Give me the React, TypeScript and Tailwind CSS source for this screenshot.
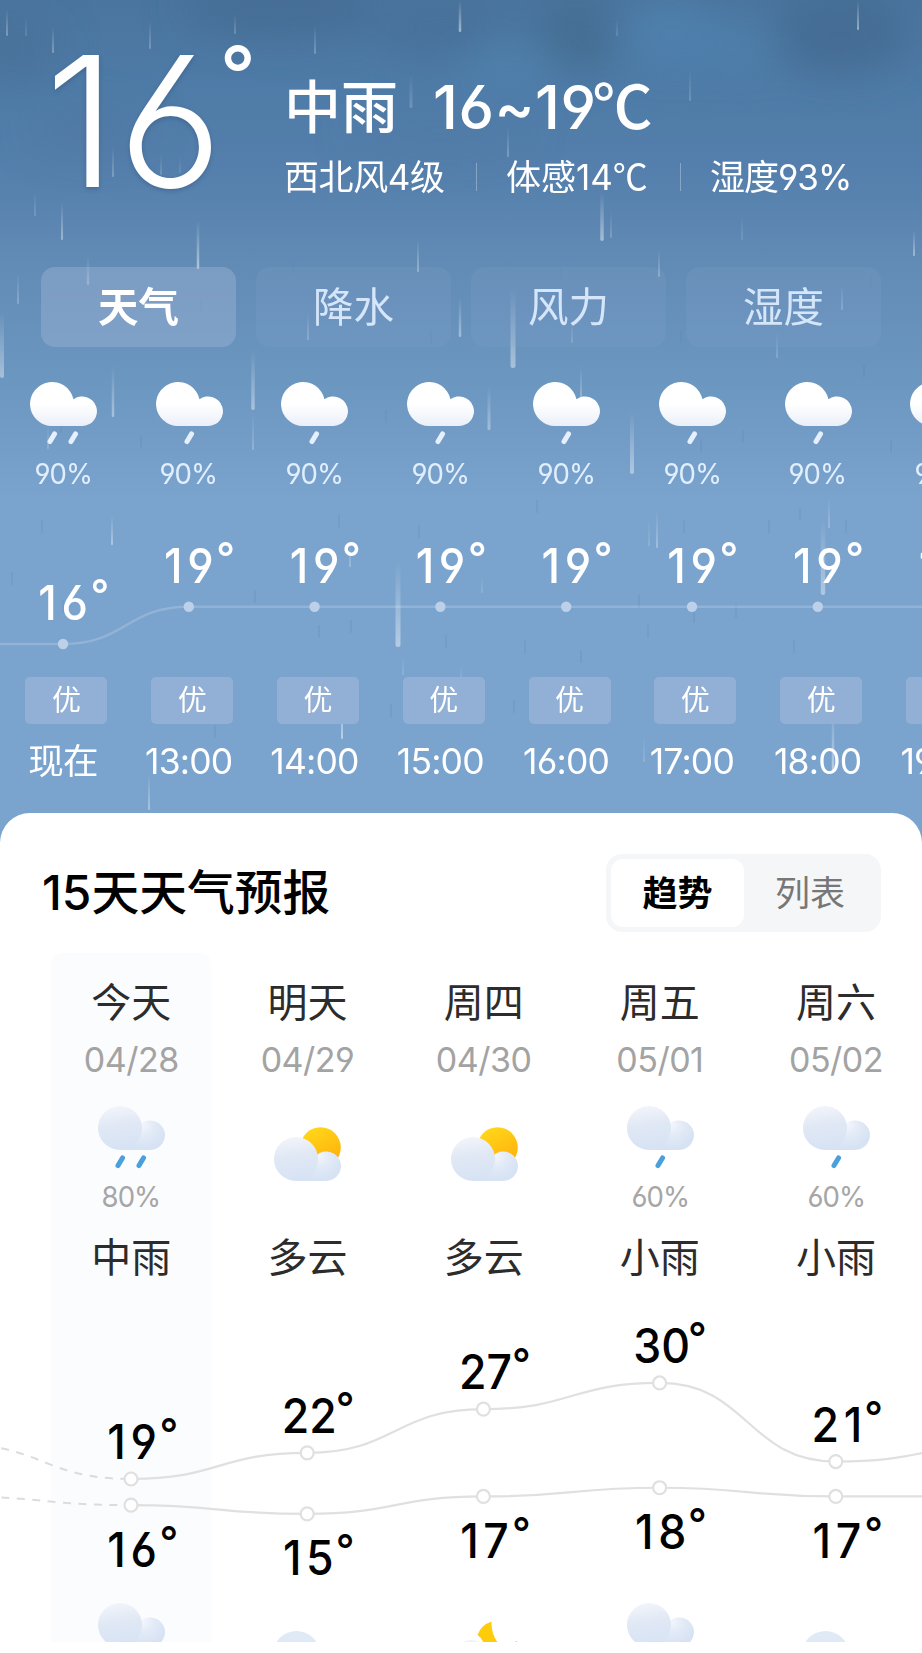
import clsx from 'clsx';

const HOUR_W = 125.8;
const DAY_W = 176.2;
const DAY_X0 = 131;

const tabs = ['天气', '降水', '风力', '湿度'];

const hours = [
  { time: '现在', temp: 16, pop: 90, drops: 2 },
  { time: '13:00', temp: 19, pop: 90, drops: 1 },
  { time: '14:00', temp: 19, pop: 90, drops: 1 },
  { time: '15:00', temp: 19, pop: 90, drops: 1 },
  { time: '16:00', temp: 19, pop: 90, drops: 1 },
  { time: '17:00', temp: 19, pop: 90, drops: 1 },
  { time: '18:00', temp: 19, pop: 90, drops: 1 },
  { time: '19:00', temp: 19, pop: 90, drops: 1 },
];

const days = [
  { name: '今天', date: '04/28', pop: 80, drops: 2, text: '中雨', high: 19, low: 16, night: 'rain' },
  { name: '明天', date: '04/29', pop: 0, drops: 0, text: '多云', high: 22, low: 15, night: 'overcast' },
  { name: '周四', date: '04/30', pop: 0, drops: 0, text: '多云', high: 27, low: 17, night: 'moon' },
  { name: '周五', date: '05/01', pop: 60, drops: 1, text: '小雨', high: 30, low: 18, night: 'rain' },
  { name: '周六', date: '05/02', pop: 60, drops: 1, text: '小雨', high: 21, low: 17, night: 'overcast' },
];

// x, top, height, width, opacity
const rain = [
  [7, 8, 28, 2, 0.3], [26, 16, 20, 1.5, 0.18], [53, 26, 27, 2, 0.3], [150, 20, 29, 2, 0.25], [235, 14, 20, 1.5, 0.3],
  [315, 24, 30, 2, 0.25], [460, 0, 32, 2.5, 0.5], [858, 0, 30, 2, 0.45], [617, 18, 18, 1.5, 0.2], [411, 74, 34, 3, 0.2],
  [690, 68, 33, 1.5, 0.25], [508, 126, 31, 2, 0.25], [113, 146, 31, 2, 0.25], [161, 155, 20, 2, 0.18], [180, 155, 18, 1.5, 0.15],
  [35, 192, 24, 1.5, 0.22], [62, 202, 38, 2, 0.4], [198, 220, 49, 2.5, 0.5], [602, 192, 49, 3.5, 0.45], [611, 212, 26, 2, 0.2],
  [742, 216, 24, 1.5, 0.18], [914, 230, 26, 2, 0.4], [418, 240, 32, 2, 0.35], [88, 256, 29, 2.5, 0.3], [18, 272, 32, 2, 0.25],
  [2, 312, 66, 4, 0.4], [113, 366, 51, 2.5, 0.4], [253, 350, 60, 3.5, 0.4], [253, 412, 38, 2, 0.22], [308, 312, 28, 2, 0.25],
  [460, 298, 39, 2.5, 0.4], [513, 288, 80, 5, 0.42], [659, 250, 27, 2, 0.3], [572, 320, 23, 2, 0.18], [581, 366, 34, 2, 0.3],
  [489, 386, 44, 3, 0.35], [632, 412, 62, 4, 0.42], [777, 332, 26, 1.5, 0.25], [842, 284, 26, 1.5, 0.3], [48, 425, 24, 1.5, 0.25],
  [112, 515, 30, 2, 0.4], [398, 560, 87, 5, 0.45], [350, 545, 22, 1.5, 0.35], [342, 692, 47, 2, 0.5], [461, 665, 36, 2, 0.3],
  [149, 772, 38, 2, 0.35], [657, 510, 38, 2, 0.3], [649, 518, 28, 1.5, 0.2], [823, 518, 77, 4.5, 0.4], [829, 498, 30, 2, 0.25],
  [833, 708, 64, 2.5, 0.5], [717, 692, 28, 1.5, 0.25], [644, 734, 28, 1.5, 0.2], [482, 575, 18, 1.5, 0.2], [403, 655, 20, 1.5, 0.2],
];

// small dark specks between the drops
const specks = [
  [41, 520], [62, 600], [11, 572], [254, 590], [338, 515], [418, 525], [318, 625], [350, 620], [445, 635], [214, 725],
  [536, 500], [683, 520], [768, 520], [799, 508], [845, 520], [638, 595], [693, 610], [735, 605], [647, 625], [524, 640],
  [580, 650], [793, 640], [390, 704], [513, 700], [60, 420], [140, 435], [385, 410], [430, 330], [600, 300], [700, 440],
  [863, 365], [890, 440], [742, 430], [200, 300], [292, 262], [40, 290], [560, 268], [870, 275], [330, 395], [680, 330],
];

function smoothPath(points: number[][]) {
  return points
    .map(([x, y], i) => {
      if (i === 0) return `M${x} ${y}`;
      const [px, py] = points[i - 1];
      const mid = (px + x) / 2;
      return `C${mid} ${py} ${mid} ${y} ${x} ${y}`;
    })
    .join(' ');
}

function Sky() {
  return (
    <svg className="absolute inset-0 h-full w-full" viewBox="0 0 922 860" preserveAspectRatio="none">
      <defs>
        <linearGradient id="sky" x1="0" y1="0" x2="0" y2="1">
          <stop offset="0" stopColor="#4a759e" />
          <stop offset="0.1" stopColor="#4e7ba7" />
          <stop offset="0.2" stopColor="#557fac" />
          <stop offset="0.3" stopColor="#618bb5" />
          <stop offset="0.45" stopColor="#6c97c1" />
          <stop offset="0.58" stopColor="#7aa3cd" />
          <stop offset="1" stopColor="#7aa3cd" />
        </linearGradient>
        <linearGradient id="drop" x1="0" y1="0" x2="0" y2="1">
          <stop offset="0" stopColor="#fff" stopOpacity="0" />
          <stop offset="1" stopColor="#fff" />
        </linearGradient>
        <filter id="haze" filterUnits="userSpaceOnUse" x="-80" y="-80" width="1080" height="400">
          <feGaussianBlur stdDeviation="19" />
        </filter>
      </defs>
      <rect width="922" height="860" fill="url(#sky)" />
      <g filter="url(#haze)">
        <ellipse cx="280" cy="10" rx="100" ry="26" fill="#456c92" opacity="0.8" />
        <ellipse cx="10" cy="50" rx="50" ry="36" fill="#476e94" opacity="0.6" />
        <ellipse cx="440" cy="30" rx="60" ry="24" fill="#456d94" opacity="0.6" />
        <ellipse cx="575" cy="38" rx="44" ry="34" fill="#416789" opacity="0.6" />
        <ellipse cx="840" cy="34" rx="70" ry="42" fill="#446a8e" opacity="0.7" />
        <ellipse cx="510" cy="66" rx="50" ry="18" fill="#5184b2" opacity="0.7" />
        <ellipse cx="670" cy="35" rx="50" ry="34" fill="#4f83b0" opacity="0.75" />
        <ellipse cx="740" cy="48" rx="40" ry="24" fill="#4f83b0" opacity="0.6" />
        <ellipse cx="90" cy="130" rx="60" ry="20" fill="#4d76a2" opacity="0.5" />
        <ellipse cx="440" cy="130" rx="90" ry="20" fill="#5079a6" opacity="0.5" />
      </g>
      {rain.map(([x, y, h, w, o]) => (
        <rect key={`${x}-${y}`} x={x - w / 2} y={y} width={w} height={h} rx={w / 2} fill="url(#drop)" opacity={o} />
      ))}
      {specks.map(([x, y]) => (
        <rect key={`${x}-${y}`} x={x} y={y} width="2" height="13" rx="1" fill="#5a83b4" opacity="0.22" />
      ))}
    </svg>
  );
}

function Drops({ count, color }: { count: number; color: string }) {
  const xs = count === 2 ? [20, 41] : [31];
  return (
    <g stroke={color} strokeWidth="5" strokeLinecap="round">
      {xs.map((x) => (
        <path key={x} d={`M${x + 4.5} 52L${x} 59.500`} />
      ))}
    </g>
  );
}

function HourIcon({ drops }: { drops: number }) {
  return (
    <svg width="67" height="64" viewBox="0 0 67 64" className="ml-px block">
      <defs>
        <linearGradient id="hourCloud" x1="0" y1="0" x2="0" y2="1">
          <stop offset="0.5" stopColor="#fff" />
          <stop offset="1" stopColor="#eaeff8" />
        </linearGradient>
      </defs>
      <path d="M22 44A22 22 0 1 1 43.500 17.200A14.800 14.800 0 1 1 52.200 44Z" fill="url(#hourCloud)" />
      <Drops count={drops} color="#e6f0fc" />
    </svg>
  );
}

function PaleCloud() {
  return (
    <>
      <defs>
        <radialGradient id="paleBack" gradientUnits="userSpaceOnUse" cx="45" cy="19" r="23">
          <stop offset="0" stopColor="#f2f5fc" />
          <stop offset="0.55" stopColor="#e0e9f6" />
          <stop offset="1" stopColor="#d7e3f4" />
        </radialGradient>
        <linearGradient id="paleFront" x1="0" y1="0" x2="0.15" y2="1">
          <stop offset="0" stopColor="#f4f6fb" />
          <stop offset="0.5" stopColor="#e0e8f5" />
          <stop offset="1" stopColor="#d7e3f4" />
        </linearGradient>
      </defs>
      <path d="M36 44H52.200A14.800 14.800 0 1 0 40 20.800Z" fill="url(#paleBack)" />
      <path d="M22 44A22 22 0 1 1 44 22A22 22 0 0 1 38 37L37 44Z" fill="url(#paleFront)" />
    </>
  );
}

function DayIcon({ drops }: { drops: number }) {
  if (drops > 0) {
    return (
      <svg width="67" height="64" viewBox="0 0 67 64" className="ml-px block">
        <PaleCloud />
        <Drops count={drops} color="#4aa0dd" />
      </svg>
    );
  }
  return (
    <svg width="67" height="54" viewBox="0 0 67 54" className="mt-[21px] ml-px block">
      <defs>
        <linearGradient id="sun" x1="0.2" y1="0" x2="0.7" y2="1">
          <stop offset="0" stopColor="#ffd91a" />
          <stop offset="1" stopColor="#ffae0c" />
        </linearGradient>
      </defs>
      <circle cx="46.500" cy="20.500" r="20.300" fill="url(#sun)" />
      <g transform="translate(0 10)">
        <PaleCloud />
      </g>
    </svg>
  );
}

function NightIcon({ kind }: { kind: string }) {
  return (
    <svg width="67" height="40" viewBox="0 0 67 40" className="ml-px block">
      {kind === 'rain' && <PaleCloud />}
      {kind === 'overcast' && <ellipse cx="22.500" cy="50" rx="23" ry="22" fill="#e0e9f6" />}
      {kind === 'moon' && (
        <>
          <path d="M40.500 18.500Q40 32 48 41H33Q31 35 26.500 32Q30 22 40.500 18.500Z" fill="#ffcc0c" />
          <path d="M62 40L66 38V40Z" fill="#ffb80c" />
          <ellipse cx="20" cy="58" rx="20" ry="21" fill="#eef2fa" />
        </>
      )}
    </svg>
  );
}

function Temp({ x, y, value, className }: { x: number; y: number; value: number; className: string }) {
  const hasOne = String(value).includes('1');
  return (
    <g className={className} transform={`translate(${x} ${y})`} fontWeight="500">
      <text x={hasOne ? 1.5 : 0} transform="scale(.93 1)" textAnchor="middle" fontSize="48" letterSpacing={hasOne ? 5 : 0}>
        {value}
      </text>
      <text x="26.500" y="-11" fontSize="41">
        °
      </text>
    </g>
  );
}

function HourChart() {
  const points = hours.map((h, i) => [63 + i * HOUR_W, 146 - (h.temp - 16) * 12.4]);
  return (
    <svg width="922" height="179" viewBox="0 0 922 179" className="block">
      <path d={smoothPath([[-60, 146], ...points])} fill="none" stroke="#fff" strokeOpacity="0.18" strokeWidth="2.5" />
      {points.map(([x, y], i) => (
        <g key={x}>
          <circle cx={x} cy={y} r="5.200" fill="#bcd0ea" />
          <Temp x={x + 1} y={y - 24} value={hours[i].temp} className="fill-white" />
        </g>
      ))}
    </svg>
  );
}

function DayChart() {
  const y = (t: number) => 149 - (t - 19) * 8.73;
  const xs = days.map((_, i) => DAY_X0 + i * DAY_W);
  const series = [
    { key: 'high' as const, prev: 23, next: 23, offset: -20 },
    { key: 'low' as const, prev: 17, next: 17, offset: 61.5 },
  ];
  return (
    <svg width="922" height="273" viewBox="0 0 922 273" className="relative block overflow-visible">
      {series.map((s) => {
        const points = days.map((d, i) => [xs[i], y(d[s.key])]);
        return (
          <g key={s.key}>
            <path d={smoothPath([[xs[0] - DAY_W, y(s.prev)], points[0]])} fill="none" stroke="#dcdcde" strokeWidth="2" strokeDasharray="8 7.500" />
            <path d={smoothPath([...points, [xs[4] + DAY_W, y(s.next)]])} fill="none" stroke="#e0e0e0" strokeWidth="2.200" />
            {points.map(([px, py], i) => (
              <g key={px}>
                <circle cx={px} cy={py} r="6.500" fill="#fff" stroke="#e0e0e0" strokeWidth="2.200" />
                <Temp x={px + 2} y={py + s.offset} value={days[i][s.key]} className="fill-black" />
              </g>
            ))}
          </g>
        );
      })}
    </svg>
  );
}

function App() {
  return (
    <div className="relative h-[1653px] w-[922px] overflow-hidden bg-white font-['Inter','Noto_Sans_CJK_SC',sans-serif] [font-feature-settings:'cv03','cv04']">
      <div className="absolute inset-x-0 top-0 h-[860px]">
        <Sky />
      </div>

      {/* 当前天气 */}
      <header className="relative flex h-[267px] text-white">
        <div className="flex h-full w-[284px] shrink-0 pt-[22px] pl-[45px]">
          <span className="w-[175px] text-[181px] leading-[200px] font-light tracking-[2px] [text-shadow:0_2px_4px_rgba(40,70,110,.35)]">16</span>
          <span className="mt-[2px] text-[78px] leading-[100px] font-medium">°</span>
        </div>
        <div className="pt-[74px]">
          <div className="flex h-[68px] items-center text-[57px] leading-[68px] font-medium whitespace-nowrap">
            <span className="w-[149px]">中雨</span>
            <span className="-mt-[6px] text-[60px] tracking-[0.5px]">
              16~19<span className="-ml-[4px] font-['Noto_Sans_CJK_SC'] font-medium">℃</span>
            </span>
          </div>
          <div className="mt-[13px] flex h-[44px] items-center text-[35px] leading-[44px] whitespace-nowrap">
            <span className="w-[192px] tracking-[-0.4px]">西北风4级</span>
            <span className="h-[28px] w-px bg-white/30" />
            <span className="-mt-[2px] w-[203px] pl-[29px]">
              体感14<span className="font-['Noto_Sans_CJK_SC']">℃</span>
            </span>
            <span className="h-[28px] w-px bg-white/30" />
            <span className="pl-[29px] tracking-[-1px]">湿度93%</span>
          </div>
        </div>
      </header>

      <nav className="relative mx-[41px] flex h-[80px] gap-[20px]">
        {tabs.map((tab, i) => (
          <button
            key={tab}
            className={clsx(
              'flex-1 rounded-[14px] pt-[2px] text-[40.5px] leading-[78px]',
              i === 0 ? 'bg-[#a8b9dc]/36 font-bold text-white' : 'bg-[#8fa8d0]/15 text-[#d6e6fa]'
            )}
          >
            {tab}
          </button>
        ))}
      </nav>

      {/* 逐小时预报 */}
      <section className="relative h-[466px] overflow-hidden pt-[35px]">
        <div className="flex">
          {hours.map((h) => (
            <div key={h.time} className="flex w-[125.8px] shrink-0 flex-col items-center">
              <HourIcon drops={h.drops} />
              <span className="mt-[10px] h-[36px] scale-x-[.95] text-[29px] leading-[36px] tracking-[-1px] text-[#e1effd]">{h.pop}%</span>
            </div>
          ))}
        </div>
        <div className="mt-[6px]">
          <HourChart />
        </div>
        <div className="flex">
          {hours.map((h) => (
            <div key={h.time} className="flex w-[125.8px] shrink-0 flex-col items-center text-white">
              <span className="ml-[7px] h-[47px] w-[82px] rounded-[5px] bg-[#92b0d6] text-center text-[29px] leading-[47px]">优</span>
              <span className="mt-[17px] h-[40px] text-[35.5px] leading-[41px] tracking-[-0.8px]">{h.time}</span>
            </div>
          ))}
        </div>
      </section>

      {/* 15天预报 */}
      <main className="relative h-[840px] rounded-t-[30px] bg-white">
        <div className="flex h-[140px] items-center justify-between pt-[20px] pr-[41px] pl-[42px]">
          <h2 className="text-[47.8px] leading-[60px] font-medium text-black">15天天气预报</h2>
          <div className="flex h-[78px] w-[275px] rounded-[16px] bg-[#f5f6f8] p-[5px] text-[35px] leading-[68px]">
            <span className="w-[133px] rounded-[12px] bg-white text-center font-bold text-black">趋势</span>
            <span className="flex-1 text-center text-[#777]">列表</span>
          </div>
        </div>

        <div className="relative h-[689px] overflow-hidden">
          <div className="absolute top-0 left-[51px] h-full w-[160px] rounded-t-[12px] bg-[#fbfcfe]" />
          <div className="relative flex pl-[43.2px]">
            {days.map((d) => (
              <div key={d.date} className="flex w-[176.2px] shrink-0 flex-col items-center pt-[24px]">
                <span className="h-[52px] text-[40px] leading-[52px] text-[#2c2c2c]">{d.name}</span>
                <span className="mt-[11px] h-[40px] text-[34px] leading-[40px] tracking-[-0.5px] text-[#a3a3a3]">{d.date}</span>
                <div className="mt-[26px] h-[76px]">
                  <DayIcon drops={d.drops} />
                </div>
                <span className="-mt-[3px] h-[36px] scale-x-[.95] text-[29px] leading-[36px] tracking-[-1px] text-[#a6a6a6]">
                  {d.pop > 0 && `${d.pop}%`}
                </span>
                <span className="mt-[17px] h-[52px] text-[40px] leading-[52px] text-[#2c2c2c]">{d.text}</span>
              </div>
            ))}
          </div>
          <div className="mt-[46px]">
            <DayChart />
          </div>
          <div className="relative flex pl-[43.2px]">
            {days.map((d) => (
              <div key={d.date} className="flex w-[176.2px] shrink-0 justify-center">
                <NightIcon kind={d.night} />
              </div>
            ))}
          </div>
        </div>
      </main>
    </div>
  );
}

export default App;
